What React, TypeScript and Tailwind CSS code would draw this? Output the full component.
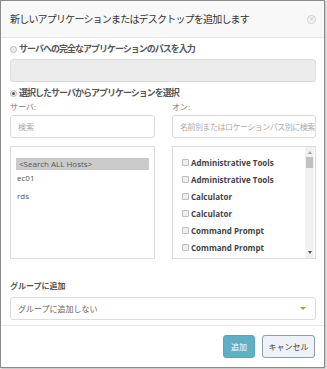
import React from "react";

const jp = "[font-family:'Open_Sans','Noto_Sans_CJK_JP',sans-serif]";

function Radio({ checked }: { checked?: boolean }) {
  return (
    <span className="w-[7px] h-[7px] rounded-full border border-[#b9b9b9] bg-[#ececec] flex items-center justify-center shrink-0">
      {checked && <span className="w-[3px] h-[3px] rounded-full bg-[#555]" />}
    </span>
  );
}

function Box() {
  return <span className="w-[7px] h-[7px] rounded-[1px] border border-[#bdbdbd] bg-[#efefef] shrink-0" />;
}

const apps = [
  "Administrative Tools",
  "Administrative Tools",
  "Calculator",
  "Calculator",
  "Command Prompt",
  "Command Prompt",
];

export default function App() {
  return (
    <div className={`w-[327px] h-[369px] bg-[#f4f4f4] ${jp}`}>
      <div className="w-[325px] h-[368px] border border-[#8c8c8c] bg-white flex flex-col shadow-[1px_1px_2px_rgba(0,0,0,0.25)]">
        {/* header */}
        <div className="h-[37px] shrink-0 bg-[#f8f8f8] border-b border-[#e6e6e6] flex items-center justify-between pl-[9px] pr-[8px]">
          <span className="text-[10px] tracking-[-0.8px] text-[#333]">新しいアプリケーションまたはデスクトップを追加します</span>
          <span className="w-[9px] h-[9px] rounded-full border border-[#cfcfcf] flex items-center justify-center text-[6px] leading-none text-[#c4c4c4]">✕</span>
        </div>

        {/* body */}
        <div className="flex flex-col pl-[9px] pr-[8px]">
          <div className="mt-[5px] h-[12px] flex items-center gap-[2px]">
            <Radio />
            <span className="text-[9px] tracking-[-1px] font-semibold text-[#555]">サーバへの完全なアプリケーションのパスを入力</span>
          </div>
          <div className="mt-[4px] h-[23px] rounded-[3px] border border-[#dcdcdc] bg-[#ebebeb]" />
          <div className="mt-[5px] h-[12px] flex items-center gap-[2px]">
            <Radio checked />
            <span className="text-[9px] tracking-[-1px] font-semibold text-[#555]">選択したサーバからアプリケーションを選択</span>
          </div>

          <div className="grid grid-cols-[145px_144px] gap-x-[17px]">
            <div className="flex flex-col">
              <span className="mt-[2px] h-[12px] leading-[12px] text-[8px] text-[#777]">サーバ:</span>
              <div className="mt-[2px] h-[23px] rounded-[3px] border border-[#dcdcdc] flex items-center px-[7px] text-[8px] text-[#aaa]">検索</div>
              <div className="mt-[8px] h-[113px] border border-[#dcdcdc] px-[5px] pt-[11px] text-[8px] text-[#555] flex flex-col">
                <div className="h-[12px] leading-[12px] bg-[#cbcbcb] pl-[3px]">&lt;Search ALL Hosts&gt;</div>
                <div className="h-[16px] leading-[16px] pl-[1px]">ec01</div>
                <div className="mt-[1px] h-[18px] leading-[18px] pl-[1px]">rds</div>
              </div>
            </div>
            <div className="flex flex-col">
              <span className="mt-[2px] h-[12px] leading-[12px] text-[8px] text-[#777]">オン:</span>
              <div className="mt-[2px] h-[23px] rounded-[3px] border border-[#dcdcdc] flex items-center px-[7px] text-[8px] tracking-[-0.5px] text-[#aaa] overflow-hidden whitespace-nowrap">名前別またはロケーションパス別に検索</div>
              <div className="mt-[8px] h-[113px] border border-[#dcdcdc] flex">
                <div className="flex-1 pt-[7px] pl-[9px] flex flex-col overflow-hidden">
                  {apps.map((a, i) => (
                    <div key={i} className="h-[17px] flex items-center gap-[2px]">
                      <Box />
                      <span className="text-[8px] font-bold text-[#444] whitespace-nowrap">{a}</span>
                    </div>
                  ))}
                </div>
                <div className="w-[9px] mr-[1px] bg-[#f1f1f1] flex flex-col items-center pt-[4px] pb-[4px]">
                  <span className="w-0 h-0 border-x-[2.5px] border-x-transparent border-b-[3px] border-b-[#a3a3a3]" />
                  <span className="mt-[3px] w-[7px] h-[11px] bg-[#c1c1c1]" />
                  <span className="flex-1" />
                  <span className="w-0 h-0 border-x-[2.5px] border-x-transparent border-t-[3px] border-t-[#505050]" />
                </div>
              </div>
            </div>
          </div>

          <span className="mt-[21px] h-[12px] leading-[12px] text-[8px] font-semibold text-[#555]">グループに追加</span>
          <div className="mt-[5px] h-[23px] rounded-[3px] border border-[#dcdcdc] flex items-center justify-between pl-[7px] pr-[9px]">
            <span className="text-[8px] text-[#666]">グループに追加しない</span>
            <span className="w-0 h-0 border-x-[3px] border-x-transparent border-t-[3px] border-t-[#a89f3c]" />
          </div>
        </div>

        {/* footer */}
        <div className="mt-[5px] flex-1 border-t border-[#e6e6e6] flex justify-end items-start gap-[7px] pt-[9px] pr-[9px]">
          <button className="w-[32px] h-[23px] rounded-[3px] bg-[#5fb0c6] border border-[#58a6bb] text-white text-[8px]">追加</button>
          <button className="w-[53px] h-[23px] rounded-[3px] bg-[#eef1f6] border border-[#8d9cb0] text-[#444] text-[8px]">キャンセル</button>
        </div>
      </div>
    </div>
  );
}
